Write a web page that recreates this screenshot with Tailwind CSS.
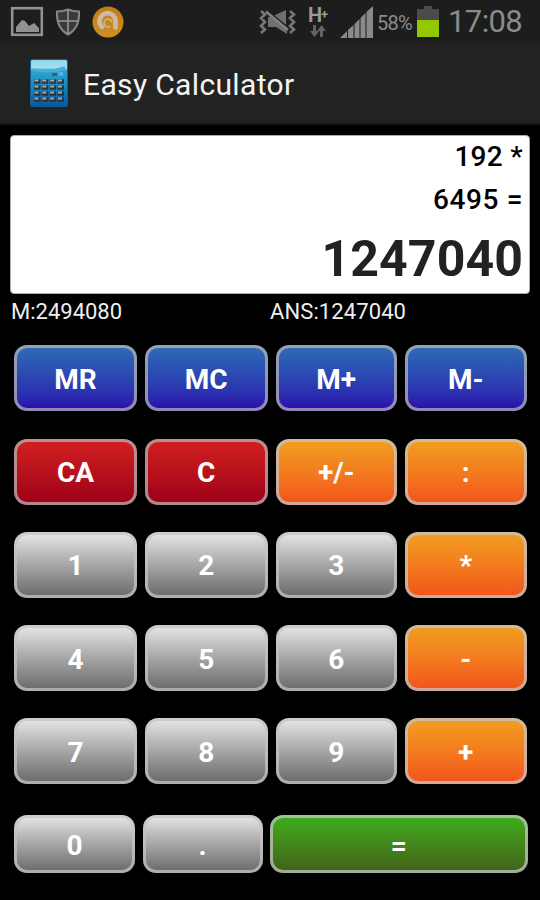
<!DOCTYPE html>
<html lang="en">
<head>
  <meta charset="UTF-8">
  <meta name="viewport" content="width=device-width, initial-scale=1.0">
  <title>Easy Calculator</title>

  <script src="https://cdn.jsdelivr.net/npm/@tailwindcss/browser@4"></script>
</head>
<body class="bg-black font-['Roboto',sans-serif] text-white">
  <div class="w-[540px] h-[900px] flex flex-col overflow-hidden">

    <div id="statusBar" class="h-[43px] bg-[#1d1d1d] flex items-center justify-between pl-[10px] pr-[17px] text-[#8b8b8b]">
      <div class="flex items-center h-full">
        <svg class="w-[34px] h-[31px]" viewBox="0 0 34 31">
          <rect x="2.2" y="2.2" width="29.6" height="26.6" fill="none" stroke="#929292" stroke-width="2.6"/>
          <path d="M6 26v-5l6-7 3 1 4 5 5-3 5 5v4z" fill="#929292"/>
        </svg>
        <svg class="w-[26px] h-[28px] ml-[11px]" viewBox="0 0 26 28">
          <path d="M2 3.500Q8 3.500 13 1.500Q18 3.500 24 3.500Q25 20 13 26.500Q1 20 2 3.500z" fill="#3a3a3a" stroke="#858585" stroke-width="2"/>
          <path d="M13 2v24M2.500 13h21" stroke="#959595" stroke-width="1.600"/>
        </svg>
        <svg class="w-[32px] h-[32px] ml-[11px]" viewBox="0 0 32 32">
          <defs>
            <linearGradient id="orb" x1="0" y1="0" x2="0" y2="1">
              <stop offset="0" stop-color="#c27a17"/>
              <stop offset="1" stop-color="#cf9220"/>
            </linearGradient>
          </defs>
          <circle cx="16" cy="16" r="15.500" fill="url(#orb)"/>
          <path d="M10 21A8 8 0 1 1 23.500 15.500V21.500" fill="none" stroke="#c9bba6" stroke-width="4.600" stroke-linecap="round" stroke-linejoin="round"/>
          <path d="M20 16.500A4 4 0 1 0 18 20.500" fill="none" stroke="#c9bba6" stroke-width="1.400"/>
        </svg>
      </div>

      <div class="flex items-center h-full">
        <svg class="w-[38px] h-[26px]" viewBox="0 0 38 26">
          <path d="M9 8h5l14 11v6L17 18H9z M15 6.500L27 1v15z" fill="#707070"/>
          <path d="M8 1L30 19.500" stroke="#1d1d1d" stroke-width="1.500"/>
          <path d="M7 2.500L29 21" stroke="#808080" stroke-width="2.600"/>
          <path d="M2 2l4 3.500-4 3.500 4 4-4 4 4 3.500-4 3.500M31 2l4 3.500-4 3.500 4 4-4 4 4 3.500-4 3.500" fill="none" stroke="#777" stroke-width="2.600"/>
        </svg>
        <div class="flex flex-col items-center ml-[9px] w-[24px]">
          <div class="flex text-[20px] leading-[17px] font-bold text-[#9a9a9a]">H<span class="text-[13px] leading-[16px] -ml-px">+</span></div>
          <svg class="w-[16px] h-[12px] mt-[1px]" viewBox="0 0 16 12">
            <path d="M3 0h3v6h3l-4.500 6L0 6h3zM10 12h3V6h3l-4.500-6L7 6h3z" fill="#636363"/>
          </svg>
        </div>
        <svg class="w-[33px] h-[32px] ml-[10px]" viewBox="0 0 33 32">
          <path d="M0 32L7 25v7zM8 24L13.500 19v13H8zM14.500 18L19.500 13v19h-5zM20.500 12L25.500 7v25h-5zM26.500 6L33 0v32h-6.500z" fill="#8a8a8a"/>
        </svg>
        <span class="text-[20px] leading-none ml-[4px] mt-[2px] w-[37px] tracking-[-0.8px] whitespace-nowrap">58%</span>
        <svg class="w-[22px] h-[31px] ml-[3px]" viewBox="0 0 22 31">
          <path d="M7 0h8v3h7v11H0V3h7z" fill="#4b4b4b"/>
          <path d="M0 14h22v17H0z" fill="#93c800"/>
        </svg>
        <span class="text-[31px] leading-none ml-[9px] w-[75px] tracking-[-0.6px] whitespace-nowrap">17:08</span>
      </div>
    </div>

    <div id="title" class="h-[82px] bg-[#222222] border-b-2 border-[#141414] flex items-center pl-[30px]">
      <svg class="w-[38px] h-[48px]" viewBox="0 0 38 48">
        <defs>
          <linearGradient id="body" x1="0" y1="0" x2="0" y2="1">
            <stop offset="0" stop-color="#8ed6ea"/>
            <stop offset="0.180" stop-color="#a5dfef"/>
            <stop offset="0.220" stop-color="#35a5cf"/>
            <stop offset="0.550" stop-color="#168ac0"/>
            <stop offset="1" stop-color="#0c569c"/>
          </linearGradient>
        </defs>
        <rect x="0.500" y="0.500" width="37" height="47" rx="2" fill="url(#body)" stroke="#0d5f94"/>
        <path d="M3 9q16 4 32-2v4q-16 4-32 1z" fill="#46b2d8"/>
        <path d="M22 15.500h5" stroke="#3a5566" stroke-width="2.500"/>
        <path d="M29 15h4" stroke="#5cb8ee" stroke-width="3"/>
        <path d="M4 22.500h30M4 28.500h30M4 34.500h30M4 40.500h30" stroke="#263843" stroke-width="4.400" stroke-dasharray="6.500 1.330"/>
        <path d="M4.500 21.500h29M4.500 27.500h29M4.500 33.500h29M4.500 39.500h29" stroke="#a9a9a5" stroke-width="2" stroke-dasharray="4 3.830"/>
      </svg>
      <h1 class="ml-[15px] mt-[3px] text-[30px] leading-none tracking-[0.35px] text-[#f3f3f3]">Easy Calculator</h1>
    </div>

    <div id="display" class="mt-[10px] mx-[10px] h-[159px] rounded-[4px] bg-white border border-[#aaaaaa] flex flex-col items-end pr-[6px] text-black">
      <div class="h-[43px] flex items-center text-[28px] font-medium tracking-[0.3px]">192 *</div>
      <div class="h-[44px] flex items-center pt-px text-[28px] font-medium tracking-[0.6px]">6495 =</div>
      <div class="h-[72px] flex items-center pt-[4px] text-[50px] font-bold tracking-[0.1px] text-[#222222]">1247040</div>
    </div>

    <div id="memory" class="flex mx-[11px] h-[36px] pt-[5px] text-[22px] leading-[26px] text-[#eeeeee]">
      <div class="w-[259px]">M:2494080</div>
      <div class="tracking-[0.1px]">ANS:1247040</div>
    </div>

    <div id="keys" class="mt-[15.3px] ml-[14px] grid grid-cols-[123px_123px_121.5px_122px] auto-rows-[66px] gap-x-[7.75px] gap-y-[27.3px] text-[28px] font-bold">
      <button class="rounded-[13px] border-3 border-[#b4b4b4]/75 bg-linear-to-b from-[#2f6cb6] to-[#2c00ac] bg-origin-border pt-[3px]">MR</button>
      <button class="rounded-[13px] border-3 border-[#b4b4b4]/75 bg-linear-to-b from-[#2f6cb6] to-[#2c00ac] bg-origin-border pt-[3px]">MC</button>
      <button class="rounded-[13px] border-3 border-[#b4b4b4]/75 bg-linear-to-b from-[#2f6cb6] to-[#2c00ac] bg-origin-border pt-[3px]">M+</button>
      <button class="rounded-[13px] border-3 border-[#b4b4b4]/75 bg-linear-to-b from-[#2f6cb6] to-[#2c00ac] bg-origin-border pt-[3px]">M-</button>

      <button class="rounded-[13px] border-3 border-[#b4b4b4]/75 bg-linear-to-b from-[#d42020] to-[#9c0018] bg-origin-border pt-[3px]">CA</button>
      <button class="rounded-[13px] border-3 border-[#b4b4b4]/75 bg-linear-to-b from-[#d42020] to-[#9c0018] bg-origin-border pt-[3px]">C</button>
      <button class="rounded-[13px] border-3 border-[#c4c4c4]/75 bg-linear-to-b from-[#f0a020] to-[#f2501c] bg-origin-border pt-[3px]">+/-</button>
      <button class="rounded-[13px] border-3 border-[#c4c4c4]/75 bg-linear-to-b from-[#f0a020] to-[#f2501c] bg-origin-border pt-[3px]">:</button>

      <button class="rounded-[13px] border-3 border-[#c4c4c4]/75 bg-linear-to-b from-[#e9e9e9] to-[#686868] bg-origin-border pt-[3px]">1</button>
      <button class="rounded-[13px] border-3 border-[#c4c4c4]/75 bg-linear-to-b from-[#e9e9e9] to-[#686868] bg-origin-border pt-[3px]">2</button>
      <button class="rounded-[13px] border-3 border-[#c4c4c4]/75 bg-linear-to-b from-[#e9e9e9] to-[#686868] bg-origin-border pt-[3px]">3</button>
      <button class="rounded-[13px] border-3 border-[#c4c4c4]/75 bg-linear-to-b from-[#f0a020] to-[#f2501c] bg-origin-border pt-[3px]">*</button>

      <button class="rounded-[13px] border-3 border-[#c4c4c4]/75 bg-linear-to-b from-[#e9e9e9] to-[#686868] bg-origin-border pt-[3px]">4</button>
      <button class="rounded-[13px] border-3 border-[#c4c4c4]/75 bg-linear-to-b from-[#e9e9e9] to-[#686868] bg-origin-border pt-[3px]">5</button>
      <button class="rounded-[13px] border-3 border-[#c4c4c4]/75 bg-linear-to-b from-[#e9e9e9] to-[#686868] bg-origin-border pt-[3px]">6</button>
      <button class="rounded-[13px] border-3 border-[#c4c4c4]/75 bg-linear-to-b from-[#f0a020] to-[#f2501c] bg-origin-border pt-[3px]">-</button>

      <button class="rounded-[13px] border-3 border-[#c4c4c4]/75 bg-linear-to-b from-[#e9e9e9] to-[#686868] bg-origin-border pt-[3px]">7</button>
      <button class="rounded-[13px] border-3 border-[#c4c4c4]/75 bg-linear-to-b from-[#e9e9e9] to-[#686868] bg-origin-border pt-[3px]">8</button>
      <button class="rounded-[13px] border-3 border-[#c4c4c4]/75 bg-linear-to-b from-[#e9e9e9] to-[#686868] bg-origin-border pt-[3px]">9</button>
      <button class="rounded-[13px] border-3 border-[#c4c4c4]/75 bg-linear-to-b from-[#f0a020] to-[#f2501c] bg-origin-border pt-[3px]">+</button>
    </div>

    <div id="bottomKeys" class="mt-[31px] ml-[14px] h-[58px] flex gap-[7.5px] text-[28px] font-bold">
      <button class="w-[121px] rounded-[13px] border-3 border-[#c4c4c4]/75 bg-linear-to-b from-[#e9e9e9] to-[#686868] bg-origin-border pt-[4px]">0</button>
      <button class="w-[120px] rounded-[13px] border-3 border-[#c4c4c4]/75 bg-linear-to-b from-[#e9e9e9] to-[#686868] bg-origin-border pt-[4px]">.</button>
      <button class="w-[257.5px] rounded-[13px] border-3 border-[#c4c4c4]/75 bg-linear-to-b from-[#3cb01c] to-[#406018] bg-origin-border pt-[4px]">=</button>
    </div>

  </div>
</body>
</html>
